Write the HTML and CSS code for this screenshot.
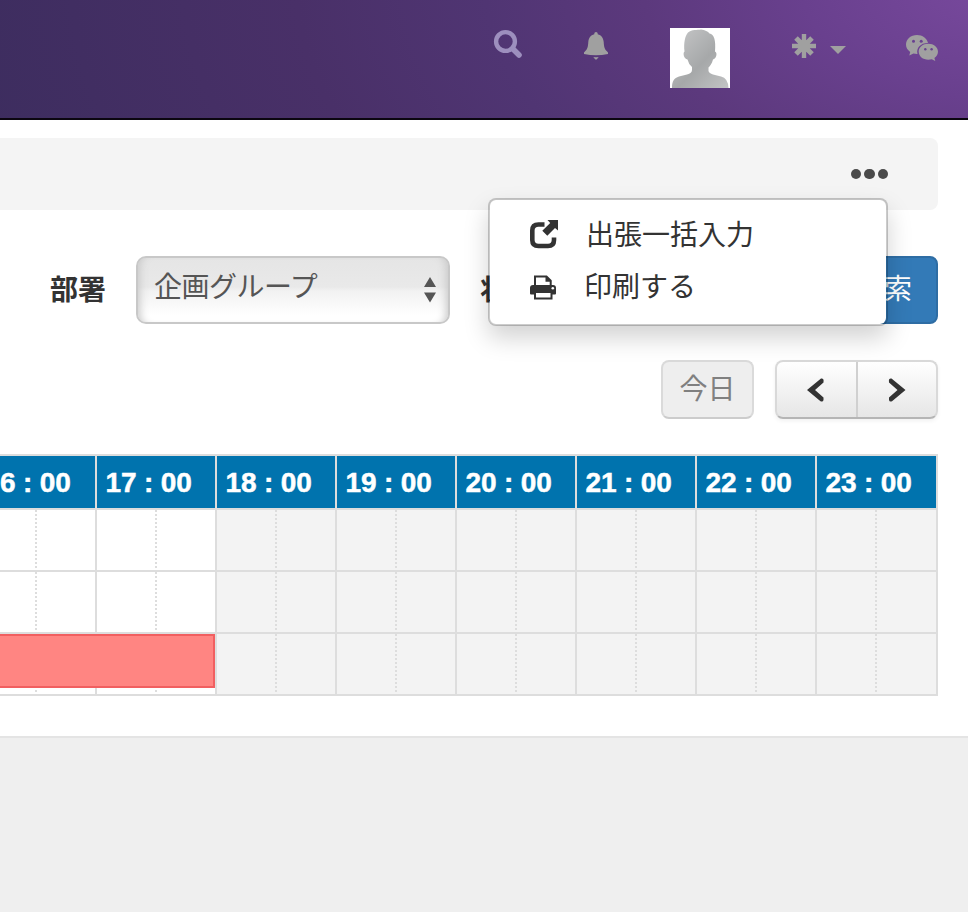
FILE: index.html
```html
<!DOCTYPE html>
<html lang="ja">
<head>
<meta charset="utf-8">
<title>スケジュール</title>
<link rel="stylesheet" href="styles.css">
</head>
<body>
<header class="topbar">
  <svg class="icon-search" width="30" height="30" viewBox="0 0 30 30"><circle cx="12.500" cy="12.500" r="9.400" fill="none" stroke="#9d8fbe" stroke-width="4.400"/><path d="M20 20L26 26" stroke="#9d8fbe" stroke-width="5.600" stroke-linecap="round"/></svg>
  <svg class="icon-bell" width="24" height="28" viewBox="0 0 24 28"><path d="M10.300 1.500Q10.300 0 12 0t1.700 1.500v.7C17.500 3 19.300 6 19.700 10c.3 5 1 7.500 3.200 9.200L24 20.500V22q-12 2.500-24 0v-1.500l1.100-1.300C3.300 17.500 4 15 4.300 10 4.700 6 6.500 3 10.300 2.200zM9.500 25q2.500.6 5 0-.3 1.500-1.500 1.700L12 28l-1-1.300Q9.800 26.500 9.500 25z" fill="#a0a0a0"/></svg>
  <svg class="avatar" width="60" height="60" viewBox="0 0 60 60"><defs><linearGradient id="person" x1="0" y1="0" x2="1" y2="1"><stop offset="0" stop-color="#c8c9ca"/><stop offset=".55" stop-color="#a6a8a9"/><stop offset="1" stop-color="#c3c4c5"/></linearGradient></defs><path d="M0 0H60V60H0z" fill="#fff"/><path d="M2 60C2 53 4 50 9 48.500L17 46.500Q22 45 22 42V39Q18.500 36 17.500 31.500C14 31 12.500 25 14.500 23.500 13.500 15 15 8 18 4.500 22 1.500 27 2 31 1.500 35 2 38 3.500 39.500 5.500 44 6 46 12 45 23.500 48 25 46 31 43 31.500 42 36 39.500 38.500 38.500 39.500V43Q39 45 43 46.500L51 48.500Q58 50 58.500 60z" fill="url(#person)"/></svg>
  <svg class="icon-asterisk" width="24" height="24" viewBox="0 0 24 24"><g stroke="#a0a0a0" stroke-width="4.400"><path d="M12 0V24M0 12H24"/><path d="M4 4L20 20M20 4L4 20" stroke-width="5"/></g><circle cx="12" cy="12" r="6.500" fill="#a0a0a0"/></svg>
  <svg class="icon-caret" width="16" height="8" viewBox="0 0 16 8"><path d="M0 0H16L8 8z" fill="#a0a0a0"/></svg>
  <svg class="icon-chat" width="32" height="26" viewBox="0 0 32 26"><path d="M11 0C4.800 0 0 4.200 0 9.600c0 3 1.500 5.600 4.200 7.300L3.300 20.600l4.200-2.100c1.300.3 2.600.5 4 .4C10 13 14.500 8 22 8 21 3.300 16.500 0 11 0z" fill="#a0a0a0"/><path d="M22.300 8.800c-5.400 0-9.600 3.500-9.600 7.900s4.200 8 9.600 8c1.300 0 2.400-.2 3.500-.5L29.300 26l-.9-3c2.200-1.500 3.600-3.700 3.600-6.300 0-4.400-4.300-7.900-9.700-7.900z" fill="#a0a0a0"/><g fill="#684190"><circle cx="7.500" cy="6.300" r="1.500"/><circle cx="15.200" cy="6.300" r="1.500"/><circle cx="19.300" cy="14.200" r="1.200"/><circle cx="25.600" cy="14.200" r="1.200"/></g></svg>
</header>

<main class="page">
  <section class="toolbar">
    <button class="more" aria-label="メニュー"><i></i><i></i><i></i></button>
    <div class="menu">
      <a class="menu-item"><svg width="30" height="30" viewBox="0 0 30 30" fill="#333"><path d="M14.500 4.500H8.500Q2.300 4.500 2.300 10.500V20Q2.300 26 8.500 26H18Q24 26 24 20V17.500" fill="none" stroke="#333" stroke-width="4.600"/><path d="M17.500 0H28V10.500L25 7.900 17.300 15.800 12.300 10.800 20.200 3z"/></svg><span>出張一括入力</span></a>
      <a class="menu-item"><svg class="printer" width="28" height="30" viewBox="0 0 28 30"><path d="M5 13V4.500H16.500L20.700 8.700V13" fill="none" stroke="#333" stroke-width="2"/><path d="M15.500 4V9.800H21.500z" fill="#333"/><path d="M3 13H23Q26 13 26 16V21.500Q26 22.500 25 22.500H1Q0 22.500 0 21.500V16Q0 13 3 13z" fill="#333"/><path d="M5 20H21.500V26.500H5z" fill="#fff" stroke="#333" stroke-width="2"/><circle cx="22.800" cy="16.300" r="1.300" fill="#fff"/></svg><span>印刷する</span></a>
    </div>
  </section>

  <form class="filters">
    <label class="label">部署</label>
    <div class="select"><span>企画グループ</span><svg width="12" height="26" viewBox="0 0 12 26"><path d="M6 0L12 10H0zM0 15.500H12L6 25.500z" fill="#555"/></svg></div>
    <label class="label label-status">状態</label>
    <button class="search" type="button">検索</button>
  </form>

  <div class="navigation">
    <button class="today" disabled>今日</button>
    <div class="pager">
      <button aria-label="前"><svg width="18" height="24" viewBox="0 0 18 24"><path d="M14 .5Q16.500 0 16.600 2.300L16.500 4.500 8 12 16.500 19.500V22Q16 24.300 13.500 23.300L0 12z" fill="#333"/></svg></button>
      <button aria-label="次"><svg width="18" height="24" viewBox="0 0 18 24"><path d="M3.500 .5Q1 0 .9 2.300L1 4.500 9.500 12 1 19.500V22Q1.500 24.300 4 23.300L17.500 12z" fill="#333"/></svg></button>
    </div>
  </div>

  <div class="calendar">
    <div class="row hours"><b>6 : 00</b><b>17 : 00</b><b>18 : 00</b><b>19 : 00</b><b>20 : 00</b><b>21 : 00</b><b>22 : 00</b><b>23 : 00</b></div>
    <div class="row slots"><i></i><i></i><i class="off"></i><i class="off"></i><i class="off"></i><i class="off"></i><i class="off"></i><i class="off"></i></div>
    <div class="row slots"><i></i><i></i><i class="off"></i><i class="off"></i><i class="off"></i><i class="off"></i><i class="off"></i><i class="off"></i></div>
    <div class="row slots"><i></i><i></i><i class="off"></i><i class="off"></i><i class="off"></i><i class="off"></i><i class="off"></i><i class="off"></i><div class="event"></div></div>
  </div>
</main>
</body>
</html>
```
FILE: styles.css
```css
* { box-sizing: border-box; }
body {
  margin: 0;
  height: 912px;
  overflow: hidden;
  background: #efefef;
  color: #333;
  font: 28px/40px "Liberation Sans", "Noto Sans CJK JP", sans-serif;
}
button { font: inherit; padding: 0; }
svg { display: block; flex: none; }

.topbar {
  display: flex;
  align-items: flex-start;
  justify-content: flex-end;
  height: 120px;
  padding-right: 30px;
  border-bottom: 2px solid #0b0610;
  background: radial-gradient(ellipse 1050px 600px at 1010px -20px, #7a4a9f 0%, #69408e 20%, #5c397d 35%, #503573 50%, #493068 68%, #3d2d5f 100%);
}
.icon-search { margin: 29px 61px 0 0; }
.icon-bell { margin: 32px 62px 0 0; }
.avatar { margin: 28px 62px 0 0; }
.icon-asterisk { margin: 34px 14px 0 0; }
.icon-caret { margin: 46px 60px 0 0; }
.icon-chat { margin-top: 35px; }

.page {
  height: 618px;
  padding: 18px 30px 0 0;
  background: #fff;
  border-bottom: 2px solid #e4e4e4;
}

.toolbar {
  position: relative;
  display: flex;
  align-items: center;
  justify-content: flex-end;
  height: 72px;
  padding-right: 50px;
  border-radius: 0 8px 8px 0;
  background: #f4f4f4;
}
.more {
  display: flex;
  gap: 3px;
  border: 0;
  background: none;
}
.more i {
  width: 10.400px;
  height: 10.400px;
  border-radius: 50%;
  background: #4a4a4a;
}
.menu {
  position: absolute;
  z-index: 2;
  top: 60px;
  right: 50px;
  width: 400px;
  height: 128px;
  padding: 10px 40px;
  border: 2px solid rgba(0, 0, 0, .2);
  border-radius: 8px;
  background: #fff;
  background-clip: padding-box;
  box-shadow: 0 12px 24px rgba(0, 0, 0, .175);
}
.menu-item {
  display: flex;
  align-items: center;
  gap: 26px;
  height: 52px;
}
.menu-item span { line-height: 54px; }
.menu-item svg { margin-top: -2px; }
.menu-item .printer { margin-top: -3px; }

.filters {
  display: flex;
  align-items: center;
  height: 68px;
  margin-top: 46px;
  padding-left: 50px;
}
.label { width: 86px; padding-top: 1px; font-weight: bold; }
.label-status { margin-left: 30px; }
.select {
  display: flex;
  align-items: center;
  justify-content: space-between;
  width: 314px;
  height: 68px;
  padding: 0 12px 0 16px;
  border: 2px solid #c8c8c8;
  border-radius: 10px;
  background: linear-gradient(#e5e5e5, #e9e9e9 45%, #f2f2f2 52%, #fff 90%);
  box-shadow: inset 9px 0 9px -7px #c8c8c8, inset -9px 0 9px -7px #c8c8c8;
  color: #555;
}
.select span { margin-top: -4px; letter-spacing: -.5px; }
.search {
  width: 108px;
  height: 68px;
  margin-left: auto;
  border: 2px solid #2e6da4;
  border-radius: 8px;
  background: #337ab7;
  color: #fff;
}

.navigation {
  display: flex;
  justify-content: flex-end;
  gap: 21px;
  height: 59px;
  margin-top: 36px;
}
.today {
  width: 93px;
  border: 2px solid #dadada;
  border-bottom-color: #ccc;
  border-radius: 8px;
  background: #eee;
  color: #808080;
  line-height: 50px;
}
.pager {
  display: flex;
  width: 163px;
  border: 2px solid #d9d9d9;
  border-bottom-color: #b5b5b5;
  border-radius: 8px;
  background: linear-gradient(#fff, #e6e6e6);
  box-shadow: 0 2px 4px rgba(0, 0, 0, .06);
}
.pager button {
  display: flex;
  flex: 1;
  align-items: center;
  justify-content: center;
  border: 0;
  background: none;
}
.pager button + button { border-left: 2px solid #d0d0d0; }

.calendar {
  width: 938px;
  margin-top: 35px;
  border-top: 2px solid #ddd;
}
.row {
  position: relative;
  display: grid;
  grid-template-columns: 95px repeat(6, 120px) 121px;
  border-right: 2px solid #ddd;
  border-bottom: 2px solid #ddd;
}
.hours b {
  height: 52px;
  padding-left: 8.500px;
  border-left: 2px solid #ddd;
  background: #0073ae;
  color: #fff;
  letter-spacing: -.15px;
  line-height: 53px;
  -webkit-text-stroke: .5px #fff;
}
.hours b:first-child { padding-left: 0; border-left: 0; }
.slots { height: 62px; }
.slots i {
  border-left: 2px solid #ddd;
  background: repeating-linear-gradient(#ddd 0 2px, transparent 2px 4px) 58px 0 / 2px 100% no-repeat;
}
.slots i:first-child { border-left: 0; background-position-x: 35px; }
.slots .off { background-color: #f3f3f3; }
.event {
  position: absolute;
  top: 0;
  left: 0;
  width: 215px;
  height: 54px;
  border: 2px solid #f15f60;
  border-left: 0;
  background: #ff8582;
}
```
